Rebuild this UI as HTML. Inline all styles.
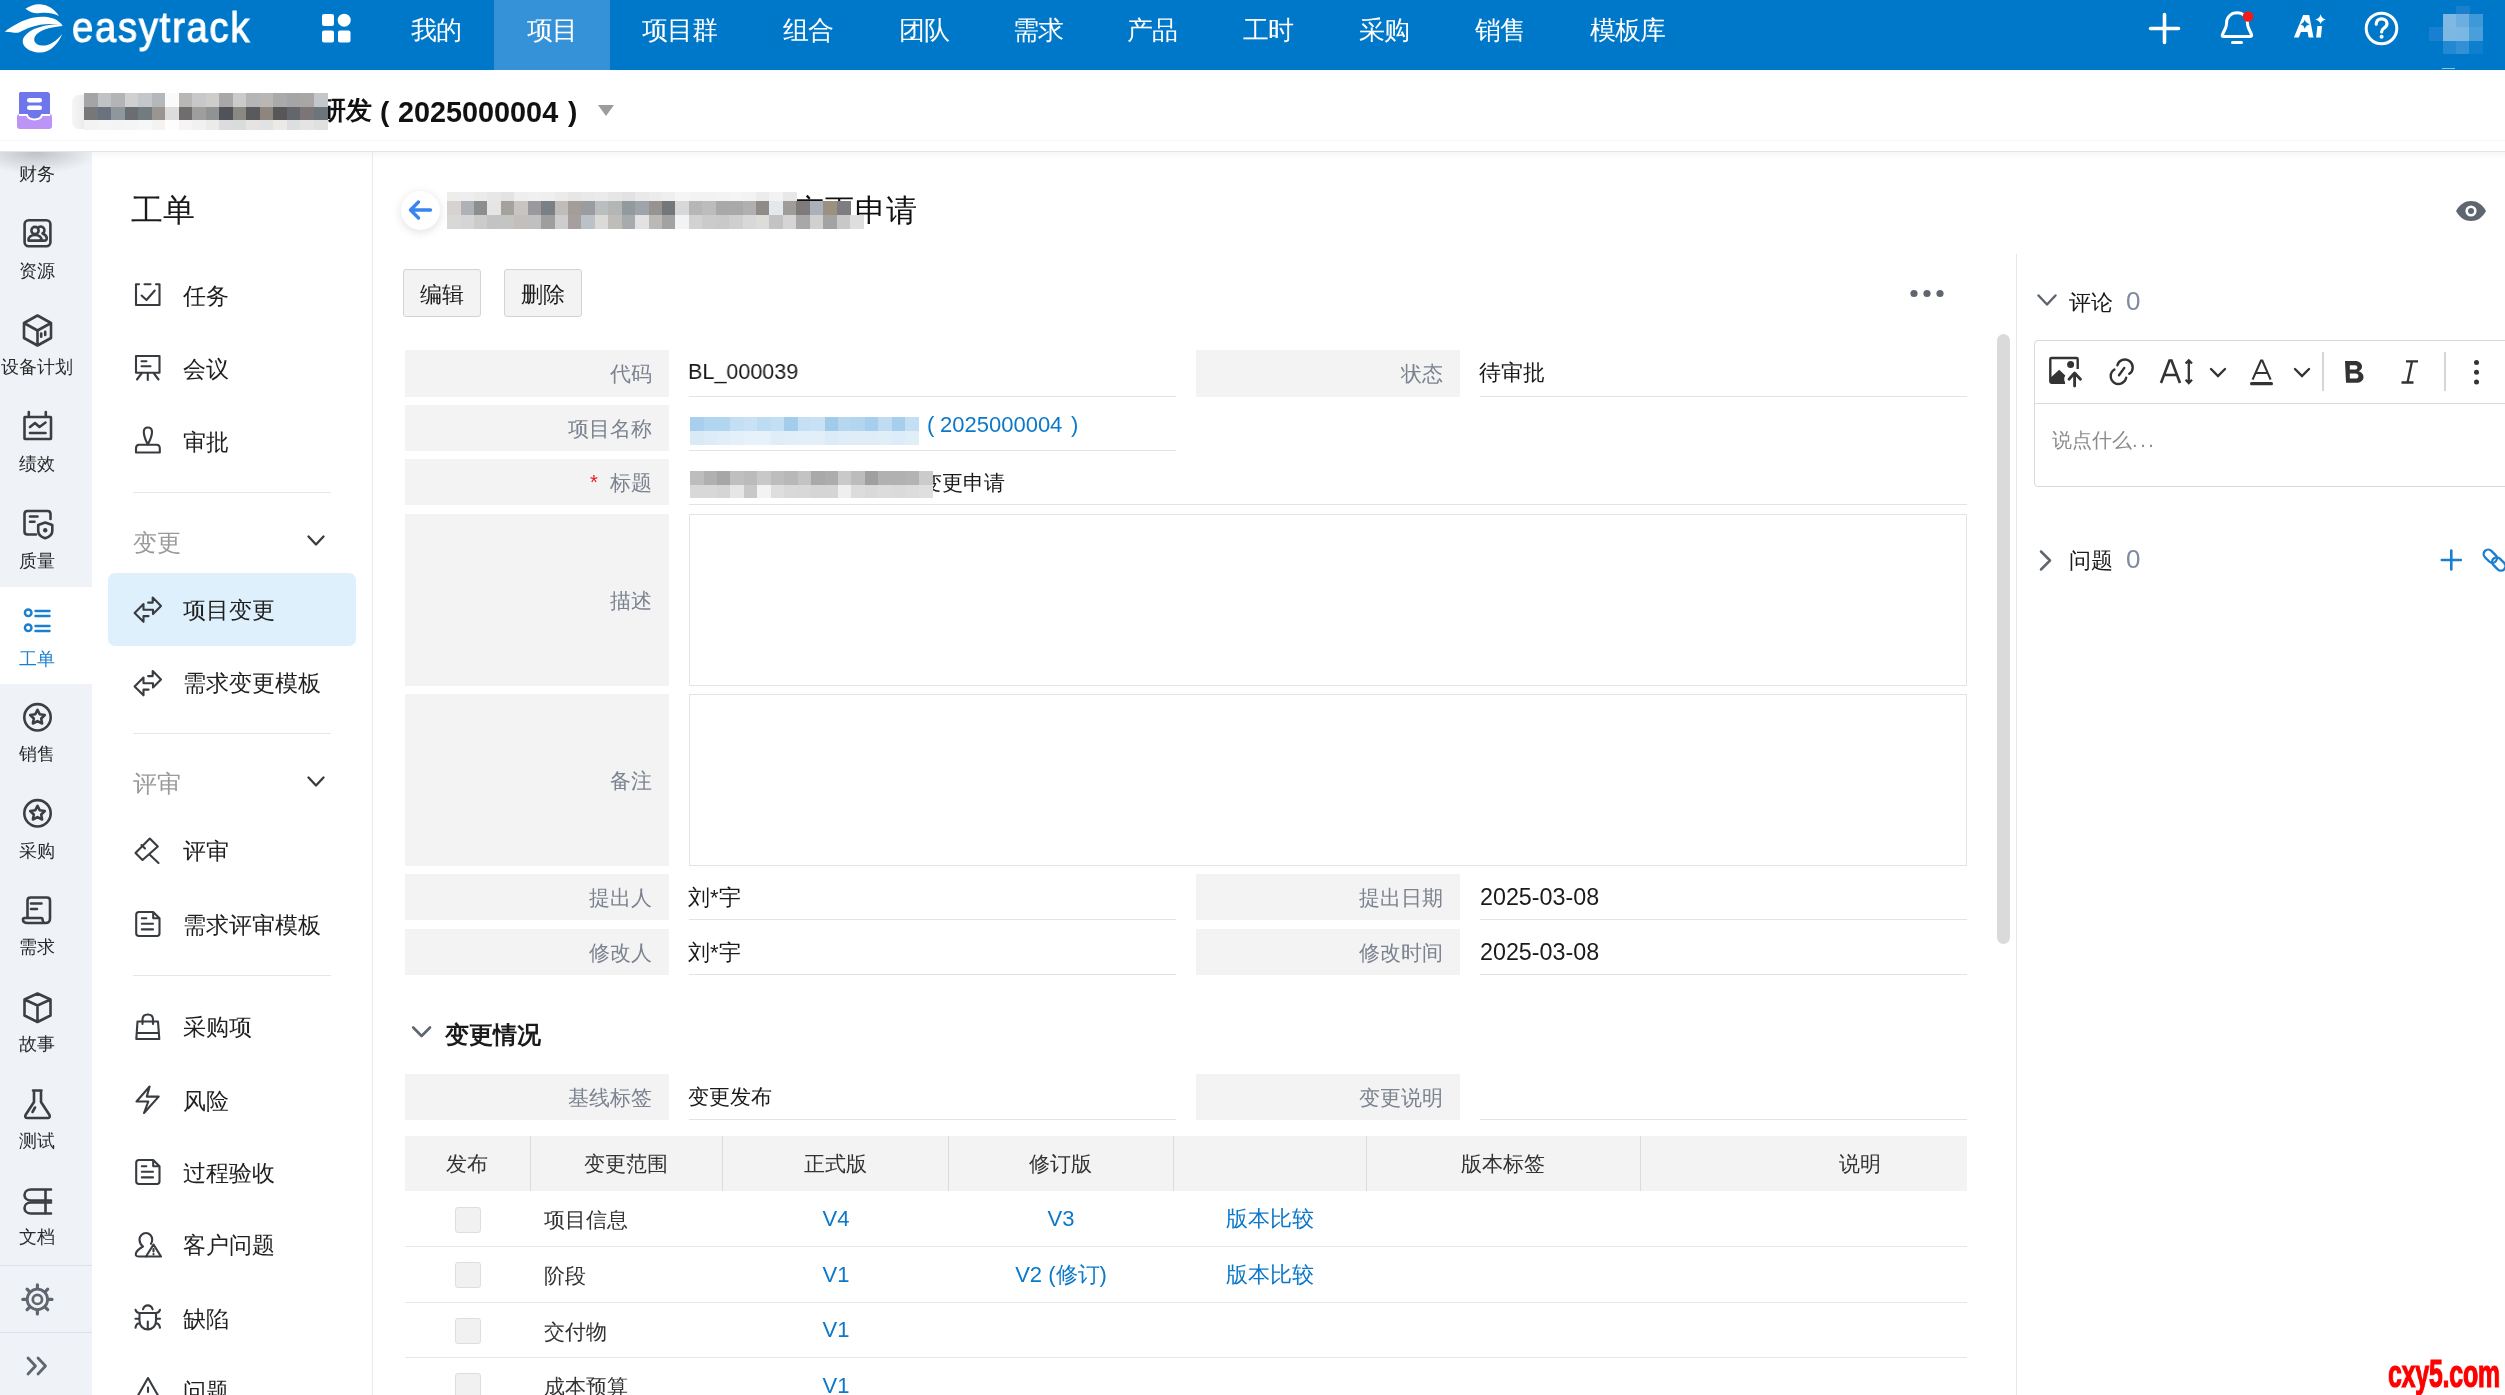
<!DOCTYPE html><html><head><meta charset="utf-8"><style>
html,body{margin:0;padding:0;width:2505px;height:1395px;overflow:hidden;background:#fff;font-family:"Liberation Sans",sans-serif;}
.t{position:absolute;white-space:nowrap;will-change:transform;}
.r{position:absolute;}
svg{position:absolute;overflow:visible;}
</style></head><body>
<div class="r" style="left:0px;top:0px;width:2505px;height:70px;background:#0078c9;"></div>
<div class="r" style="left:494px;top:0px;width:116px;height:70px;background:#3592d8;"></div>
<svg style="left:0;top:0" width="70" height="60" viewBox="0 0 70 60"><g fill="#fff">
<path d="M25.4,8.8 C30,5.5 36,3.8 40,4.3 C48,4.8 55,9.5 58.9,15.9 C53,13 47,12.3 40,13 C35,13.6 31,13 25.4,8.8 Z"/>
<path d="M4.7,31.8 C12,26 22,20 34,17.5 C45,15.5 57,17 62.8,25.8 C55,23 42,23 30,27.5 C24,29.5 20,32.5 17.5,32.8 C13,33 9,31.5 4.7,31.8 Z"/>
<path d="M59.5,24.2 C45,24.5 30,28 24,37 C20,44 26,51 38,52.5 C50,53.5 58,44 62.3,34 C56,41 50,46 42,45.6 C35,45 32,40 36,35 C40,30 50,27 62.8,26 Z"/>
</g></svg>
<div class="t" style="left:72px;top:-2.5px;font-size:42px;line-height:42px;color:#fff;font-weight:normal;line-height:60px;transform:scaleX(0.91);transform-origin:0 0;letter-spacing:1.9px;-webkit-text-stroke:1px #fff">easytrack</div>
<svg style="left:322;top:14px;left:322px" width="30" height="30" viewBox="0 0 30 30"><g fill="#fff">
<rect x="0" y="0" width="12" height="12" rx="2"/><circle cx="22.2" cy="6.2" r="6.5"/>
<rect x="0" y="16.5" width="12" height="12" rx="2"/><rect x="16" y="16.5" width="12.5" height="12" rx="2"/></g></svg>
<div class="t" style="left:411px;top:16.5px;font-size:26px;line-height:26px;color:#fff;font-weight:normal;letter-spacing:-0.8px">我的</div>
<div class="t" style="left:526.6px;top:16.5px;font-size:26px;line-height:26px;color:#fff;font-weight:normal;letter-spacing:-0.8px">项目</div>
<div class="t" style="left:642px;top:16.5px;font-size:26px;line-height:26px;color:#fff;font-weight:normal;letter-spacing:-0.8px">项目群</div>
<div class="t" style="left:782.7px;top:16.5px;font-size:26px;line-height:26px;color:#fff;font-weight:normal;letter-spacing:-0.8px">组合</div>
<div class="t" style="left:898.5px;top:16.5px;font-size:26px;line-height:26px;color:#fff;font-weight:normal;letter-spacing:-0.8px">团队</div>
<div class="t" style="left:1013px;top:16.5px;font-size:26px;line-height:26px;color:#fff;font-weight:normal;letter-spacing:-0.8px">需求</div>
<div class="t" style="left:1127px;top:16.5px;font-size:26px;line-height:26px;color:#fff;font-weight:normal;letter-spacing:-0.8px">产品</div>
<div class="t" style="left:1243px;top:16.5px;font-size:26px;line-height:26px;color:#fff;font-weight:normal;letter-spacing:-0.8px">工时</div>
<div class="t" style="left:1359px;top:16.5px;font-size:26px;line-height:26px;color:#fff;font-weight:normal;letter-spacing:-0.8px">采购</div>
<div class="t" style="left:1475px;top:16.5px;font-size:26px;line-height:26px;color:#fff;font-weight:normal;letter-spacing:-0.8px">销售</div>
<div class="t" style="left:1590px;top:16.5px;font-size:26px;line-height:26px;color:#fff;font-weight:normal;letter-spacing:-0.8px">模板库</div>
<svg style="left:2149px;top:13px" width="32" height="32" viewBox="0 0 32 32"><path d="M15.5,1.5 V29.5 M1.5,15.5 H29.5" stroke="#fff" stroke-width="3.6" stroke-linecap="round"/></svg>
<svg style="left:2220px;top:11px" width="36" height="36" viewBox="0 0 36 36"><g fill="none" stroke="#fff" stroke-width="3" stroke-linejoin="round" stroke-linecap="round">
<path d="M3,25.5 H30.5 C31.5,25.5 32,24.5 31.5,23.5 L28.5,17 C27.8,15.5 27.5,14 27.5,12.5 C27.5,6 23,1.8 17,1.8 C11,1.8 6.5,6 6.5,12.5 C6.5,14 6.2,15.5 5.5,17 L2.5,23.5 C2,24.5 2.2,25.5 3,25.5 Z"/>
<path d="M12.5,31.5 H21.5"/></g><circle cx="28" cy="5.5" r="5.3" fill="#f31a1a"/></svg>
<svg style="left:2293px;top:13px" width="36" height="28" viewBox="0 0 36 28"><g fill="#fff">
<path fill-rule="evenodd" d="M10.2,2 H16.2 L20.5,24.4 H15.6 L14.6,19 H7.9 L5.8,24.4 H0.9 Z M11.8,6.6 Q12.700000000000001,10.4 16.9,11.3 Q12.700000000000001,12.200000000000001 11.8,15.9 Q10.9,12.200000000000001 7.4,11.3 Q10.9,10.4 11.8,6.6 Z"/>
<path d="M24.4,13 H29 L27.9,24.4 H23.1 Z"/>
<path d="M27.6,1.2 Q28.6,5.4 32.7,6.4 Q28.6,7.4 27.6,11 Q26.6,7.4 22.4,6.4 Q26.6,5.4 27.6,1.2 Z"/>
</g></svg>
<svg style="left:2364px;top:11px" width="36" height="36" viewBox="0 0 36 36"><circle cx="17.5" cy="17.5" r="15.3" fill="none" stroke="#fff" stroke-width="3"/>
<path d="M12.2,13.2 C12.2,9.8 14.6,7.8 17.6,7.8 C20.7,7.8 23,9.8 23,12.8 C23,15.5 21,16.5 19.5,17.5 C18.2,18.4 17.6,19.3 17.6,21" fill="none" stroke="#fff" stroke-width="3.2" stroke-linecap="round"/>
<circle cx="17.6" cy="25.8" r="2" fill="#fff"/></svg>
<div class="r" style="left:2456.0px;top:6.0px;width:14.0px;height:8.7px;background:#1a80cd;"></div>
<div class="r" style="left:2442.5px;top:14.1px;width:14.0px;height:13.4px;background:#7eb8e3;"></div>
<div class="r" style="left:2456.0px;top:14.1px;width:14.0px;height:13.4px;background:#6aafe0;"></div>
<div class="r" style="left:2469.4px;top:14.1px;width:14.0px;height:13.4px;background:#3f98d8;"></div>
<div class="r" style="left:2429.1px;top:26.9px;width:14.0px;height:14.6px;background:#1980cf;"></div>
<div class="r" style="left:2442.5px;top:26.9px;width:14.0px;height:14.6px;background:#7db8e3;"></div>
<div class="r" style="left:2456.0px;top:26.9px;width:14.0px;height:14.6px;background:#7ab8e3;"></div>
<div class="r" style="left:2469.4px;top:26.9px;width:14.0px;height:14.6px;background:#4a9ed9;"></div>
<div class="r" style="left:2442.5px;top:40.9px;width:14.0px;height:13.5px;background:#2389d3;"></div>
<div class="r" style="left:2456.0px;top:40.9px;width:14.0px;height:13.5px;background:#3190d6;"></div>
<div class="r" style="left:2469.4px;top:40.9px;width:14.0px;height:13.5px;background:#0e7ecf;"></div>
<div class="r" style="left:2442px;top:68px;width:13px;height:1px;background:#8cc4ec;"></div>
<div class="r" style="left:0px;top:140px;width:2505px;height:1px;background:#f8f8f8;"></div>
<div class="r" style="left:0px;top:151px;width:2505px;height:1px;background:#e4e4e4;"></div>
<div class="r" style="left:92px;top:152px;width:2413px;height:7px;background:linear-gradient(rgba(0,0,0,0.035),rgba(0,0,0,0));"></div>
<svg style="left:17px;top:92px" width="36" height="38" viewBox="0 0 36 38">
<rect x="0" y="22" width="35" height="15" rx="3" fill="#bc93f6"/>
<path d="M3,0 H30 A3,3 0 0 1 33,3 V23 H24 C23,26 20,27 17,27 C14,27 11,26 10,23 H2 V3 A3,3 0 0 1 3,0 Z" fill="#6f75ea" stroke="#fff" stroke-width="0"/>
<path d="M2,23 H10 C11,26 14,27.5 17.5,27.5 C21,27.5 24,26 25,23 H33" fill="none" stroke="#fff" stroke-width="2"/>
<rect x="10" y="6" width="15" height="4.5" rx="2.2" fill="#fff"/><rect x="10" y="13.5" width="15" height="4.5" rx="2.2" fill="#fff"/>
</svg>
<div class="r" style="left:72px;top:95px;width:14px;height:34px;background:linear-gradient(90deg,#f6f6f6,#e9e9e9);border-radius:7px 0 0 7px"></div>
<div class="t" style="left:320px;top:97px;font-size:26px;line-height:26px;color:#111;font-weight:bold;">研发</div>
<div class="r" style="left:84.0px;top:93.0px;width:14.1px;height:14.6px;background:#a4a4a6;"></div>
<div class="r" style="left:97.5px;top:93.0px;width:14.1px;height:14.6px;background:#c0c3c6;"></div>
<div class="r" style="left:111.0px;top:93.0px;width:14.1px;height:14.6px;background:#b3b4b6;"></div>
<div class="r" style="left:124.5px;top:93.0px;width:14.1px;height:14.6px;background:#d0d0d2;"></div>
<div class="r" style="left:138.0px;top:93.0px;width:14.1px;height:14.6px;background:#c4c7c9;"></div>
<div class="r" style="left:151.5px;top:93.0px;width:14.1px;height:14.6px;background:#b5b8ba;"></div>
<div class="r" style="left:165.0px;top:93.0px;width:14.1px;height:14.6px;background:#fafafa;"></div>
<div class="r" style="left:178.5px;top:93.0px;width:14.1px;height:14.6px;background:#b9b7b6;"></div>
<div class="r" style="left:192.0px;top:93.0px;width:14.1px;height:14.6px;background:#c8c8ca;"></div>
<div class="r" style="left:205.5px;top:93.0px;width:14.1px;height:14.6px;background:#cfcdcb;"></div>
<div class="r" style="left:219.0px;top:93.0px;width:14.1px;height:14.6px;background:#a9a8a8;"></div>
<div class="r" style="left:232.5px;top:93.0px;width:14.1px;height:14.6px;background:#cbcbcb;"></div>
<div class="r" style="left:246.0px;top:93.0px;width:14.1px;height:14.6px;background:#b3b6b5;"></div>
<div class="r" style="left:259.5px;top:93.0px;width:14.1px;height:14.6px;background:#b9b6b3;"></div>
<div class="r" style="left:273.0px;top:93.0px;width:14.1px;height:14.6px;background:#aaaaaa;"></div>
<div class="r" style="left:286.5px;top:93.0px;width:14.1px;height:14.6px;background:#a5a5a7;"></div>
<div class="r" style="left:300.0px;top:93.0px;width:14.1px;height:14.6px;background:#a9a7a5;"></div>
<div class="r" style="left:313.5px;top:93.0px;width:14.1px;height:14.6px;background:#c4c7ca;"></div>
<div class="r" style="left:84.0px;top:107.0px;width:14.1px;height:13.6px;background:#77777a;"></div>
<div class="r" style="left:97.5px;top:107.0px;width:14.1px;height:13.6px;background:#6a7280;"></div>
<div class="r" style="left:111.0px;top:107.0px;width:14.1px;height:13.6px;background:#8e979e;"></div>
<div class="r" style="left:124.5px;top:107.0px;width:14.1px;height:13.6px;background:#6b6e70;"></div>
<div class="r" style="left:138.0px;top:107.0px;width:14.1px;height:13.6px;background:#727b80;"></div>
<div class="r" style="left:151.5px;top:107.0px;width:14.1px;height:13.6px;background:#9a9590;"></div>
<div class="r" style="left:165.0px;top:107.0px;width:14.1px;height:13.6px;background:#dcdcdc;"></div>
<div class="r" style="left:178.5px;top:107.0px;width:14.1px;height:13.6px;background:#6f6d6e;"></div>
<div class="r" style="left:192.0px;top:107.0px;width:14.1px;height:13.6px;background:#a09e9c;"></div>
<div class="r" style="left:205.5px;top:107.0px;width:14.1px;height:13.6px;background:#8f9394;"></div>
<div class="r" style="left:219.0px;top:107.0px;width:14.1px;height:13.6px;background:#50535a;"></div>
<div class="r" style="left:232.5px;top:107.0px;width:14.1px;height:13.6px;background:#8a8882;"></div>
<div class="r" style="left:246.0px;top:107.0px;width:14.1px;height:13.6px;background:#5a5a5c;"></div>
<div class="r" style="left:259.5px;top:107.0px;width:14.1px;height:13.6px;background:#8e857e;"></div>
<div class="r" style="left:273.0px;top:107.0px;width:14.1px;height:13.6px;background:#575757;"></div>
<div class="r" style="left:286.5px;top:107.0px;width:14.1px;height:13.6px;background:#63666b;"></div>
<div class="r" style="left:300.0px;top:107.0px;width:14.1px;height:13.6px;background:#7b7675;"></div>
<div class="r" style="left:313.5px;top:107.0px;width:14.1px;height:13.6px;background:#6d757c;"></div>
<div class="r" style="left:84.0px;top:120.0px;width:14.1px;height:9.6px;background:#f3f3f3;"></div>
<div class="r" style="left:97.5px;top:120.0px;width:14.1px;height:9.6px;background:#f5f5f5;"></div>
<div class="r" style="left:111.0px;top:120.0px;width:14.1px;height:9.6px;background:#f3f4f3;"></div>
<div class="r" style="left:124.5px;top:120.0px;width:14.1px;height:9.6px;background:#f5f5f5;"></div>
<div class="r" style="left:138.0px;top:120.0px;width:14.1px;height:9.6px;background:#f7f7f7;"></div>
<div class="r" style="left:151.5px;top:120.0px;width:14.1px;height:9.6px;background:#f3f3f3;"></div>
<div class="r" style="left:165.0px;top:120.0px;width:14.1px;height:9.6px;background:#fdfdfd;"></div>
<div class="r" style="left:178.5px;top:120.0px;width:14.1px;height:9.6px;background:#f5f5f5;"></div>
<div class="r" style="left:192.0px;top:120.0px;width:14.1px;height:9.6px;background:#f1f1f1;"></div>
<div class="r" style="left:205.5px;top:120.0px;width:14.1px;height:9.6px;background:#ebebeb;"></div>
<div class="r" style="left:219.0px;top:120.0px;width:14.1px;height:9.6px;background:#dcdcdc;"></div>
<div class="r" style="left:232.5px;top:120.0px;width:14.1px;height:9.6px;background:#dadcdc;"></div>
<div class="r" style="left:246.0px;top:120.0px;width:14.1px;height:9.6px;background:#e6e4e2;"></div>
<div class="r" style="left:259.5px;top:120.0px;width:14.1px;height:9.6px;background:#e0e2e4;"></div>
<div class="r" style="left:273.0px;top:120.0px;width:14.1px;height:9.6px;background:#ebeae6;"></div>
<div class="r" style="left:286.5px;top:120.0px;width:14.1px;height:9.6px;background:#dcdee0;"></div>
<div class="r" style="left:300.0px;top:120.0px;width:14.1px;height:9.6px;background:#e4e4e4;"></div>
<div class="r" style="left:313.5px;top:120.0px;width:14.1px;height:9.6px;background:#e0e0e0;"></div>
<div class="t" style="left:380px;top:98px;font-size:28px;line-height:28px;color:#111;font-weight:bold;">(</div>
<div class="t" style="left:398px;top:98px;font-size:28.8px;line-height:28.8px;color:#111;font-weight:bold;">2025000004</div>
<div class="t" style="left:568px;top:98px;font-size:28px;line-height:28px;color:#111;font-weight:bold;">)</div>
<svg style="left:597px;top:104px" width="18" height="13" viewBox="0 0 18 13"><path d="M1,1 H17 L9,12 Z" fill="#9c9c9c"/></svg>
<div class="r" style="left:0px;top:152px;width:92px;height:1243px;background:#eff3f7;"></div>
<div class="r" style="left:0px;top:152px;width:92px;height:26px;background:radial-gradient(ellipse 62px 22px at 36px 0px, rgba(110,110,115,0.38), rgba(200,200,200,0) 100%);"></div>
<div class="r" style="left:0px;top:587px;width:92px;height:97px;background:#ffffff;"></div>
<div class="t" style="left:19px;top:165px;font-size:18px;line-height:18px;color:#2a2a2a;font-weight:normal;">财务</div>
<div class="t" style="left:19px;top:262px;font-size:18px;line-height:18px;color:#2a2a2a;font-weight:normal;">资源</div>
<div class="t" style="left:1px;top:358px;font-size:18px;line-height:18px;color:#2a2a2a;font-weight:normal;">设备计划</div>
<div class="t" style="left:19px;top:455px;font-size:18px;line-height:18px;color:#2a2a2a;font-weight:normal;">绩效</div>
<div class="t" style="left:19px;top:552px;font-size:18px;line-height:18px;color:#2a2a2a;font-weight:normal;">质量</div>
<div class="t" style="left:19px;top:649.5px;font-size:18px;line-height:18px;color:#1a7fd0;font-weight:normal;">工单</div>
<div class="t" style="left:19px;top:745px;font-size:18px;line-height:18px;color:#2a2a2a;font-weight:normal;">销售</div>
<div class="t" style="left:19px;top:842px;font-size:18px;line-height:18px;color:#2a2a2a;font-weight:normal;">采购</div>
<div class="t" style="left:19px;top:938px;font-size:18px;line-height:18px;color:#2a2a2a;font-weight:normal;">需求</div>
<div class="t" style="left:19px;top:1035px;font-size:18px;line-height:18px;color:#2a2a2a;font-weight:normal;">故事</div>
<div class="t" style="left:19px;top:1132px;font-size:18px;line-height:18px;color:#2a2a2a;font-weight:normal;">测试</div>
<div class="t" style="left:19px;top:1228px;font-size:18px;line-height:18px;color:#2a2a2a;font-weight:normal;">文档</div>
<div class="r" style="left:0px;top:1265px;width:92px;height:1px;background:#dbe2ea;"></div>
<div class="r" style="left:0px;top:1332px;width:92px;height:1px;background:#dbe2ea;"></div>
<svg style="left:0;top:0" width="92" height="1395" viewBox="0 0 92 1395"><rect x="24.6" y="220.3" width="25.8" height="26" rx="4" fill="none" stroke="#3b3e43" stroke-width="2.6" stroke-linecap="round" stroke-linejoin="round"/><circle cx="35" cy="230.5" r="3.6" fill="none" stroke="#3b3e43" stroke-width="2.6" stroke-linecap="round" stroke-linejoin="round"/><path d="M39,227 A3.4,3.4 0 1 1 42.5,233.5 C45,234.5 46.5,236 46.8,238 C47,239.5 46,240.6 44.5,240.6 H40" fill="none" stroke="#3b3e43" stroke-width="2.6" stroke-linecap="round" stroke-linejoin="round"/><path d="M28.5,240.6 C28,237 31,235 35,235 C39,235 42,237 41.5,240.6 Z" fill="none" stroke="#3b3e43" stroke-width="2.6" stroke-linecap="round" stroke-linejoin="round"/><path d="M37.5,315.5 L51,323 V338 L37.5,345.5 L24,338 V323 Z M24,323 L37.5,330.5 L51,323 M37.5,330.5 V345.5" fill="none" stroke="#3b3e43" stroke-width="2.6" stroke-linecap="round" stroke-linejoin="round"/><path d="M41.2,333.5 V336.8 M45.2,331.8 V335" fill="none" stroke="#3b3e43" stroke-width="2.6" stroke-linecap="round" stroke-linejoin="round"/><rect x="24.5" y="417" width="26.5" height="22" rx="0.5" fill="none" stroke="#3b3e43" stroke-width="2.6" stroke-linecap="round" stroke-linejoin="round"/><path d="M28.8,412 V416 M45.8,412 V416" fill="none" stroke="#3b3e43" stroke-width="2.6" stroke-linecap="round" stroke-linejoin="round"/><path d="M30,427 L35,423 L39.5,427 L45.5,422.5 M30,433 H45.5" fill="none" stroke="#3b3e43" stroke-width="2.6" stroke-linecap="round" stroke-linejoin="round"/><path d="M36,534.5 H27.5 C25.5,534.5 24.5,533.5 24.5,531.5 V514 C24.5,512 25.5,511 27.5,511 H47.5 C49.5,511 50.5,512 50.5,514 V519" fill="none" stroke="#3b3e43" stroke-width="2.6" stroke-linecap="round" stroke-linejoin="round"/><path d="M30,516.5 H37.5 M30,521.8 H34.5" fill="none" stroke="#3b3e43" stroke-width="2.6" stroke-linecap="round" stroke-linejoin="round"/><path d="M45.2,522.5 L52.3,525 V531 C52.3,534.5 49,537 45.2,538.3 C41.4,537 38.2,534.5 38.2,531 V525 Z" fill="none" stroke="#3b3e43" stroke-width="2.6" stroke-linecap="round" stroke-linejoin="round"/><circle cx="45.2" cy="530.3" r="2.2" fill="#3b3e43"/><circle cx="37.5" cy="717.3" r="13.2" fill="none" stroke="#3b3e43" stroke-width="2.6" stroke-linecap="round" stroke-linejoin="round"/><path d="M37.5,709.8 L39.8,714.3 L44.8,715 L41.2,718.5 L42.1,723.5 L37.5,721.1 L32.9,723.5 L33.8,718.5 L30.2,715 L35.2,714.3 Z" fill="none" stroke="#3b3e43" stroke-width="2.6" stroke-linecap="round" stroke-linejoin="round"/><circle cx="37.5" cy="813.3" r="13.2" fill="none" stroke="#3b3e43" stroke-width="2.6" stroke-linecap="round" stroke-linejoin="round"/><path d="M37.5,805.8 L39.8,810.3 L44.8,811 L41.2,814.5 L42.1,819.5 L37.5,817.1 L32.9,819.5 L33.8,814.5 L30.2,811 L35.2,810.3 Z" fill="none" stroke="#3b3e43" stroke-width="2.6" stroke-linecap="round" stroke-linejoin="round"/><path d="M27.5,918 V900.5 C27.5,898.5 28.5,897.5 30.5,897.5 H47 C49,897.5 50,898.5 50,900.5 V918.5 C50,921.5 48,923 45.5,923 H27.5 C24.5,923 23,921.5 23,919.5 C23,918.5 23.5,918 24.5,918 H41 C42,918 42.5,918.5 42.5,919.5 C42.5,921.5 44,923 45.5,923" fill="none" stroke="#3b3e43" stroke-width="2.6" stroke-linecap="round" stroke-linejoin="round"/><path d="M31,903.5 H41.5 M31,909 H37" fill="none" stroke="#3b3e43" stroke-width="2.6" stroke-linecap="round" stroke-linejoin="round"/><path d="M37.5,993.5 L50.5,999.5 V1015.5 L37.5,1022 L24.5,1015.5 V999.5 Z M24.5,999.5 L37.5,1005.5 L50.5,999.5 M37.5,1005.5 V1022" fill="none" stroke="#3b3e43" stroke-width="2.6" stroke-linecap="round" stroke-linejoin="round"/><path d="M33,1090.5 H41.5 M34,1090.5 V1102 L25.5,1115 C24.8,1116.5 25.5,1118 27.2,1118 H47.8 C49.5,1118 50.2,1116.5 49.5,1115 L41,1102 V1090.5" fill="none" stroke="#3b3e43" stroke-width="2.6" stroke-linecap="round" stroke-linejoin="round"/><path d="M32.5,1112 L35,1107.5" fill="none" stroke="#3b3e43" stroke-width="2.6" stroke-linecap="round" stroke-linejoin="round"/><path d="M51,1189.5 H31 C27,1189.5 24.5,1192 24.5,1195 C24.5,1198 27,1200.5 31,1200.5 H51 M45.5,1189.5 V1200.5" fill="none" stroke="#3b3e43" stroke-width="2.6" stroke-linecap="round" stroke-linejoin="round"/><path d="M51,1202.5 H31 C27,1202.5 24.5,1205 24.5,1208 C24.5,1211 27,1213.5 31,1213.5 H51 M45.5,1202.5 V1213.5" fill="none" stroke="#3b3e43" stroke-width="2.6" stroke-linecap="round" stroke-linejoin="round"/><circle cx="28.2" cy="612.8" r="3.3" fill="none" stroke="#1a7fd0" stroke-width="2.4"/><circle cx="28.2" cy="627.8" r="3.3" fill="none" stroke="#1a7fd0" stroke-width="2.4"/><path d="M35.5,611 H49.5 M35.5,616 H49.5 M35.5,626 H49.5 M35.5,631 H49.5" stroke="#1a7fd0" stroke-width="2.4" stroke-linecap="round"/><circle cx="37.4" cy="1299.4" r="10.2" fill="none" stroke="#5f6670" stroke-width="2.8"/><circle cx="37.4" cy="1299.4" r="4.6" fill="none" stroke="#5f6670" stroke-width="2.7"/><path d="M48.90,1299.40 L52.00,1299.40 M45.53,1307.53 L47.72,1309.72 M37.40,1310.90 L37.40,1314.00 M29.27,1307.53 L27.08,1309.72 M25.90,1299.40 L22.80,1299.40 M29.27,1291.27 L27.08,1289.08 M37.40,1287.90 L37.40,1284.80 M45.53,1291.27 L47.72,1289.08" stroke="#5f6670" stroke-width="3.2" stroke-linecap="round"/><path d="M28,1358 L35.5,1366 L28,1374 M38,1358 L45.5,1366 L38,1374" fill="none" stroke="#5f6670" stroke-width="2.8" stroke-linecap="round" stroke-linejoin="round"/></svg>
<div class="r" style="left:372px;top:152px;width:1px;height:1243px;background:#e6eaef;"></div>
<div class="t" style="left:131px;top:194.5px;font-size:31.5px;line-height:31.5px;color:#1a1a1a;font-weight:normal;">工单</div>
<div class="r" style="left:108px;top:573px;width:248px;height:73px;background:#dff0fd;border-radius:7px"></div>
<div class="r" style="left:133px;top:492px;width:198px;height:1px;background:#e3e8ee;"></div>
<div class="r" style="left:133px;top:733px;width:198px;height:1px;background:#e3e8ee;"></div>
<div class="r" style="left:133px;top:975px;width:198px;height:1px;background:#e3e8ee;"></div>
<div class="t" style="left:183px;top:284.5px;font-size:23.3px;line-height:23.3px;color:#1f1f1f;font-weight:normal;">任务</div>
<div class="t" style="left:183px;top:357.5px;font-size:23.3px;line-height:23.3px;color:#1f1f1f;font-weight:normal;">会议</div>
<div class="t" style="left:183px;top:430.5px;font-size:23.3px;line-height:23.3px;color:#1f1f1f;font-weight:normal;">审批</div>
<div class="t" style="left:183px;top:598.5px;font-size:23.3px;line-height:23.3px;color:#1f1f1f;font-weight:normal;">项目变更</div>
<div class="t" style="left:183px;top:671.5px;font-size:23.3px;line-height:23.3px;color:#1f1f1f;font-weight:normal;">需求变更模板</div>
<div class="t" style="left:183px;top:839.5px;font-size:23.3px;line-height:23.3px;color:#1f1f1f;font-weight:normal;">评审</div>
<div class="t" style="left:183px;top:913.5px;font-size:23.3px;line-height:23.3px;color:#1f1f1f;font-weight:normal;">需求评审模板</div>
<div class="t" style="left:183px;top:1015.5px;font-size:23.3px;line-height:23.3px;color:#1f1f1f;font-weight:normal;">采购项</div>
<div class="t" style="left:183px;top:1089.5px;font-size:23.3px;line-height:23.3px;color:#1f1f1f;font-weight:normal;">风险</div>
<div class="t" style="left:183px;top:1161.5px;font-size:23.3px;line-height:23.3px;color:#1f1f1f;font-weight:normal;">过程验收</div>
<div class="t" style="left:183px;top:1233.5px;font-size:23.3px;line-height:23.3px;color:#1f1f1f;font-weight:normal;">客户问题</div>
<div class="t" style="left:183px;top:1307.5px;font-size:23.3px;line-height:23.3px;color:#1f1f1f;font-weight:normal;">缺陷</div>
<div class="t" style="left:183px;top:1379.5px;font-size:23.3px;line-height:23.3px;color:#1f1f1f;font-weight:normal;">问题</div>
<div class="t" style="left:133px;top:530.5px;font-size:24px;line-height:24px;color:#9a9a9a;font-weight:normal;">变更</div>
<div class="t" style="left:133px;top:771.5px;font-size:24px;line-height:24px;color:#9a9a9a;font-weight:normal;">评审</div>
<svg style="left:0;top:0" width="372" height="1395" viewBox="0 0 372 1395"><path d="M136,284.2 V305 H159.5 V284.2 M136,284.2 H139 M144.5,284.2 H150.5 M156,284.2 H159.5" fill="none" stroke="#383b40" stroke-width="2.1" stroke-linecap="round" stroke-linejoin="round"/><path d="M141.6,295.5 L146.5,300 L154.8,290.5" fill="none" stroke="#383b40" stroke-width="2.1" stroke-linecap="round" stroke-linejoin="round"/><rect x="136" y="356" width="23.5" height="16.8" fill="none" stroke="#383b40" stroke-width="2.1" stroke-linecap="round" stroke-linejoin="round"/><path d="M141.5,361.2 H146.5 M141.5,366.2 H150.5 M147.8,373 V380 M141.5,373.5 L137,379.5 M154,373.5 L158.5,379.5" fill="none" stroke="#383b40" stroke-width="2.1" stroke-linecap="round" stroke-linejoin="round"/><path d="M147.8,444.5 C145.5,440 143.8,436 143.8,432 C143.8,429.2 145.5,427.5 147.8,427.5 C150.2,427.5 152,429.2 152,432 C152,436 150.2,440 147.8,444.5 Z" fill="none" stroke="#383b40" stroke-width="2.1" stroke-linecap="round" stroke-linejoin="round"/><path d="M139,444.8 H156.5 C158.5,444.8 159.8,446.5 159.8,448.5 V452.5 H136 V448.5 C136,446.5 137,444.8 139,444.8 Z" fill="none" stroke="#383b40" stroke-width="2.1" stroke-linecap="round" stroke-linejoin="round"/><path d="M148.1,602.6 H152.7 V597.5 L161,606 L153,614.1 V609.8 H143.5 V604 L134.6,613 L143.5,621.8 V616.1 H148.6" fill="none" stroke="#383b40" stroke-width="2.1" stroke-linecap="round" stroke-linejoin="round"/><path d="M148.1,676.1 H152.7 V671 L161,679.5 L153,687.6 V683.3 H143.5 V677.5 L134.6,686.5 L143.5,695.3 V689.6 H148.6" fill="none" stroke="#383b40" stroke-width="2.1" stroke-linecap="round" stroke-linejoin="round"/><path d="M149.8,838.5 L157.8,846.5 L142.5,860 L135.5,853 Z M141.5,845 L145,848.5 M149.5,854.5 L158.5,863" fill="none" stroke="#383b40" stroke-width="2.1" stroke-linecap="round" stroke-linejoin="round"/><path d="M139,912 H153.2 L159.5,918.3 V933.3 C159.5,935 158.5,936 157,936 H139 C137.2,936 136.2,935 136.2,933.3 V914.8 C136.2,913 137.2,912 139,912 Z M153.2,912 V918.3 H159.5" fill="none" stroke="#383b40" stroke-width="2.1" stroke-linecap="round" stroke-linejoin="round"/><path d="M141.8,918.2 H146.3 M141.8,923.8 H153 M141.8,929.4 H153" fill="none" stroke="#383b40" stroke-width="2.1" stroke-linecap="round" stroke-linejoin="round"/><path d="M137.5,1021.5 H158 L159.3,1039 H136.3 Z M136.8,1033 H158.8 M142.5,1024 V1019.5 C142.5,1016 145,1014.5 147.8,1014.5 C150.5,1014.5 153,1016 153,1019.5 V1024" fill="none" stroke="#383b40" stroke-width="2.1" stroke-linecap="round" stroke-linejoin="round"/><path d="M149.6,1086.5 L136.5,1101.5 H148.3 L144,1113 L158.7,1096.6 H146.8 Z" fill="none" stroke="#383b40" stroke-width="2.1" stroke-linecap="round" stroke-linejoin="round"/><path d="M139,1160 H153.2 L159.5,1166.3 V1181.3 C159.5,1183 158.5,1184 157,1184 H139 C137.2,1184 136.2,1183 136.2,1181.3 V1162.8 C136.2,1161 137.2,1160 139,1160 Z M153.2,1160 V1166.3 H159.5" fill="none" stroke="#383b40" stroke-width="2.1" stroke-linecap="round" stroke-linejoin="round"/><path d="M141.8,1166.2 H146.3 M141.8,1171.8 H153 M141.8,1177.4 H153" fill="none" stroke="#383b40" stroke-width="2.1" stroke-linecap="round" stroke-linejoin="round"/><path d="M146,1256.5 H138.5 C136,1256.5 135.3,1255 136,1253 C137,1250.5 139.5,1248.5 143,1246.5 C140.5,1244.5 139.5,1242 139.5,1239.5 C139.5,1236 142.5,1233 146,1233 C149.5,1233 152.2,1236 152.2,1239.5 C152.2,1241 151.8,1242.5 151,1243.8" fill="none" stroke="#383b40" stroke-width="2.1" stroke-linecap="round" stroke-linejoin="round"/><path d="M153.5,1244.5 L161,1256.5 H146 Z M153.5,1249 V1251.5 M153.5,1254 V1254.2" fill="none" stroke="#383b40" stroke-width="2.1" stroke-linecap="round" stroke-linejoin="round"/><path d="M139.5,1313 H156 V1320.5 C156,1326 152.5,1329.5 147.8,1329.5 C143,1329.5 139.5,1326 139.5,1320.5 Z M143,1309.3 C143.8,1306.8 145.5,1305.4 147.8,1305.4 C150,1305.4 151.8,1306.8 152.6,1309.3 M147.8,1321.5 V1329 M139.5,1313 C137.5,1313 136,1311.5 135.5,1309.8 M156,1313 C158,1313 159.5,1311.5 160,1309.8 M139.5,1318.8 H135.5 M156,1318.8 H160 M139.5,1323.3 C137.5,1323.3 136,1325 135.5,1327.8 M156,1323.3 C158,1323.3 159.5,1325 160,1327.8" fill="none" stroke="#383b40" stroke-width="2.1" stroke-linecap="round" stroke-linejoin="round"/><path d="M148,1378 L160,1399 H136 Z M148,1387.5 V1392" fill="none" stroke="#383b40" stroke-width="2.1" stroke-linecap="round" stroke-linejoin="round"/><path d="M308.5,536.5 L316,544.5 L323.5,536.5 M308.5,777.5 L316,785.5 L323.5,777.5" fill="none" stroke="#383b40" stroke-width="2.3" stroke-linecap="round" stroke-linejoin="round"/></svg>
<div class="r" style="left:400.5px;top:190.5px;width:39px;height:39px;border-radius:50%;background:#fff;box-shadow:0 2px 10px rgba(0,0,0,0.13)"></div>
<svg style="left:400px;top:190px" width="40" height="40" viewBox="0 0 40 40"><path d="M10.5,20 H30.5 M18.5,12 L10.5,20 L18.5,28" fill="none" stroke="#3a84ef" stroke-width="3.4" stroke-linecap="round" stroke-linejoin="round"/></svg>
<div class="t" style="left:793px;top:195px;font-size:31px;line-height:31px;color:#111;font-weight:normal;">变更申请</div>
<div class="r" style="left:447.1px;top:192.0px;width:14.0px;height:9.9px;background:#ededed;"></div>
<div class="r" style="left:460.5px;top:192.0px;width:14.0px;height:9.9px;background:#eeeeee;"></div>
<div class="r" style="left:474.0px;top:192.0px;width:14.0px;height:9.9px;background:#ebebeb;"></div>
<div class="r" style="left:487.4px;top:192.0px;width:14.0px;height:9.9px;background:#e7e7e7;"></div>
<div class="r" style="left:500.8px;top:192.0px;width:14.0px;height:9.9px;background:#e3e3e3;"></div>
<div class="r" style="left:514.2px;top:192.0px;width:14.0px;height:9.9px;background:#eeeeee;"></div>
<div class="r" style="left:527.7px;top:192.0px;width:14.0px;height:9.9px;background:#f0f0f0;"></div>
<div class="r" style="left:541.1px;top:192.0px;width:14.0px;height:9.9px;background:#efefef;"></div>
<div class="r" style="left:554.5px;top:192.0px;width:14.0px;height:9.9px;background:#ebebeb;"></div>
<div class="r" style="left:568.0px;top:192.0px;width:14.0px;height:9.9px;background:#e6e6e6;"></div>
<div class="r" style="left:581.4px;top:192.0px;width:14.0px;height:9.9px;background:#e9e9e9;"></div>
<div class="r" style="left:594.8px;top:192.0px;width:14.0px;height:9.9px;background:#ebebeb;"></div>
<div class="r" style="left:608.3px;top:192.0px;width:14.0px;height:9.9px;background:#e6e6e6;"></div>
<div class="r" style="left:621.7px;top:192.0px;width:14.0px;height:9.9px;background:#e2e2e2;"></div>
<div class="r" style="left:635.1px;top:192.0px;width:14.0px;height:9.9px;background:#e9e9e9;"></div>
<div class="r" style="left:648.5px;top:192.0px;width:14.0px;height:9.9px;background:#ececec;"></div>
<div class="r" style="left:662.0px;top:192.0px;width:14.0px;height:9.9px;background:#efefef;"></div>
<div class="r" style="left:675.4px;top:192.0px;width:14.0px;height:9.9px;background:#f5f5f5;"></div>
<div class="r" style="left:688.8px;top:192.0px;width:14.0px;height:9.9px;background:#f3f3f3;"></div>
<div class="r" style="left:702.3px;top:192.0px;width:14.0px;height:9.9px;background:#f2f2f2;"></div>
<div class="r" style="left:715.7px;top:192.0px;width:14.0px;height:9.9px;background:#f3f3f3;"></div>
<div class="r" style="left:729.1px;top:192.0px;width:14.0px;height:9.9px;background:#f5f5f5;"></div>
<div class="r" style="left:742.6px;top:192.0px;width:14.0px;height:9.9px;background:#f3f3f3;"></div>
<div class="r" style="left:756.0px;top:192.0px;width:14.0px;height:9.9px;background:#ececec;"></div>
<div class="r" style="left:769.4px;top:192.0px;width:14.0px;height:9.9px;background:#f3f3f3;"></div>
<div class="r" style="left:782.8px;top:192.0px;width:14.0px;height:9.9px;background:#e8e8e8;"></div>
<div class="r" style="left:447.1px;top:201.3px;width:14.0px;height:14.0px;background:#d6d2cf;"></div>
<div class="r" style="left:460.5px;top:201.3px;width:14.0px;height:14.0px;background:#aeb1b6;"></div>
<div class="r" style="left:474.0px;top:201.3px;width:14.0px;height:14.0px;background:#8e8e8e;"></div>
<div class="r" style="left:487.4px;top:201.3px;width:14.0px;height:14.0px;background:#e5e5e6;"></div>
<div class="r" style="left:500.8px;top:201.3px;width:14.0px;height:14.0px;background:#a5a19d;"></div>
<div class="r" style="left:514.2px;top:201.3px;width:14.0px;height:14.0px;background:#c8c4c1;"></div>
<div class="r" style="left:527.7px;top:201.3px;width:14.0px;height:14.0px;background:#9a9a9e;"></div>
<div class="r" style="left:541.1px;top:201.3px;width:14.0px;height:14.0px;background:#7b7f86;"></div>
<div class="r" style="left:554.5px;top:201.3px;width:14.0px;height:14.0px;background:#c0bcb8;"></div>
<div class="r" style="left:568.0px;top:201.3px;width:14.0px;height:14.0px;background:#a49c99;"></div>
<div class="r" style="left:581.4px;top:201.3px;width:14.0px;height:14.0px;background:#9a9c9f;"></div>
<div class="r" style="left:594.8px;top:201.3px;width:14.0px;height:14.0px;background:#b8bfbe;"></div>
<div class="r" style="left:608.3px;top:201.3px;width:14.0px;height:14.0px;background:#b4b6b5;"></div>
<div class="r" style="left:621.7px;top:201.3px;width:14.0px;height:14.0px;background:#939a9d;"></div>
<div class="r" style="left:635.1px;top:201.3px;width:14.0px;height:14.0px;background:#9fa4aa;"></div>
<div class="r" style="left:648.5px;top:201.3px;width:14.0px;height:14.0px;background:#969391;"></div>
<div class="r" style="left:662.0px;top:201.3px;width:14.0px;height:14.0px;background:#737779;"></div>
<div class="r" style="left:675.4px;top:201.3px;width:14.0px;height:14.0px;background:#d8d8d8;"></div>
<div class="r" style="left:688.8px;top:201.3px;width:14.0px;height:14.0px;background:#b5b6b8;"></div>
<div class="r" style="left:702.3px;top:201.3px;width:14.0px;height:14.0px;background:#bebcba;"></div>
<div class="r" style="left:715.7px;top:201.3px;width:14.0px;height:14.0px;background:#a8aaa9;"></div>
<div class="r" style="left:729.1px;top:201.3px;width:14.0px;height:14.0px;background:#a9a9a9;"></div>
<div class="r" style="left:742.6px;top:201.3px;width:14.0px;height:14.0px;background:#b0b0b0;"></div>
<div class="r" style="left:756.0px;top:201.3px;width:14.0px;height:14.0px;background:#8f8b86;"></div>
<div class="r" style="left:769.4px;top:201.3px;width:14.0px;height:14.0px;background:#e4e7ec;"></div>
<div class="r" style="left:782.8px;top:201.3px;width:14.0px;height:14.0px;background:#9f9d9a;"></div>
<div class="r" style="left:796.3px;top:201.3px;width:14.0px;height:14.0px;background:#7f7a7b;"></div>
<div class="r" style="left:809.7px;top:201.3px;width:14.0px;height:14.0px;background:#aab1b9;"></div>
<div class="r" style="left:823.1px;top:201.3px;width:14.0px;height:14.0px;background:#9a9180;"></div>
<div class="r" style="left:836.6px;top:201.3px;width:14.0px;height:14.0px;background:#7c7e82;"></div>
<div class="r" style="left:447.1px;top:214.7px;width:14.0px;height:13.9px;background:#d8d8d8;"></div>
<div class="r" style="left:460.5px;top:214.7px;width:14.0px;height:13.9px;background:#d5d5d5;"></div>
<div class="r" style="left:474.0px;top:214.7px;width:14.0px;height:13.9px;background:#cbcbcb;"></div>
<div class="r" style="left:487.4px;top:214.7px;width:14.0px;height:13.9px;background:#c3c3c3;"></div>
<div class="r" style="left:500.8px;top:214.7px;width:14.0px;height:13.9px;background:#c3c5c2;"></div>
<div class="r" style="left:514.2px;top:214.7px;width:14.0px;height:13.9px;background:#c2bfbd;"></div>
<div class="r" style="left:527.7px;top:214.7px;width:14.0px;height:13.9px;background:#c0c0c0;"></div>
<div class="r" style="left:541.1px;top:214.7px;width:14.0px;height:13.9px;background:#9e9e9e;"></div>
<div class="r" style="left:554.5px;top:214.7px;width:14.0px;height:13.9px;background:#cdcdcd;"></div>
<div class="r" style="left:568.0px;top:214.7px;width:14.0px;height:13.9px;background:#a79f9d;"></div>
<div class="r" style="left:581.4px;top:214.7px;width:14.0px;height:13.9px;background:#bac2c8;"></div>
<div class="r" style="left:594.8px;top:214.7px;width:14.0px;height:13.9px;background:#dbdad6;"></div>
<div class="r" style="left:608.3px;top:214.7px;width:14.0px;height:13.9px;background:#bebdb9;"></div>
<div class="r" style="left:621.7px;top:214.7px;width:14.0px;height:13.9px;background:#a7abae;"></div>
<div class="r" style="left:635.1px;top:214.7px;width:14.0px;height:13.9px;background:#e2e2e2;"></div>
<div class="r" style="left:648.5px;top:214.7px;width:14.0px;height:13.9px;background:#bcb8b6;"></div>
<div class="r" style="left:662.0px;top:214.7px;width:14.0px;height:13.9px;background:#a2a2a2;"></div>
<div class="r" style="left:675.4px;top:214.7px;width:14.0px;height:13.9px;background:#f2f3f5;"></div>
<div class="r" style="left:688.8px;top:214.7px;width:14.0px;height:13.9px;background:#d2d2d2;"></div>
<div class="r" style="left:702.3px;top:214.7px;width:14.0px;height:13.9px;background:#cbcbcb;"></div>
<div class="r" style="left:715.7px;top:214.7px;width:14.0px;height:13.9px;background:#c9c9c9;"></div>
<div class="r" style="left:729.1px;top:214.7px;width:14.0px;height:13.9px;background:#cfcfcf;"></div>
<div class="r" style="left:742.6px;top:214.7px;width:14.0px;height:13.9px;background:#d8d8da;"></div>
<div class="r" style="left:756.0px;top:214.7px;width:14.0px;height:13.9px;background:#dcdcd8;"></div>
<div class="r" style="left:769.4px;top:214.7px;width:14.0px;height:13.9px;background:#c3c3c2;"></div>
<div class="r" style="left:782.8px;top:214.7px;width:14.0px;height:13.9px;background:#d5d5d5;"></div>
<div class="r" style="left:796.3px;top:214.7px;width:14.0px;height:13.9px;background:#a9a7a8;"></div>
<div class="r" style="left:809.7px;top:214.7px;width:14.0px;height:13.9px;background:#d0d0d0;"></div>
<div class="r" style="left:823.1px;top:214.7px;width:14.0px;height:13.9px;background:#a3a3a3;"></div>
<div class="r" style="left:836.6px;top:214.7px;width:14.0px;height:13.9px;background:#c8c8c9;"></div>
<div class="r" style="left:850.0px;top:214.7px;width:14.0px;height:13.9px;background:#dedede;"></div>
<div class="r" style="left:403px;top:269px;width:76px;height:46px;background:#f3f3f3;border:1px solid #d3d3d3;border-radius:3px"></div>
<div class="t" style="left:420px;top:284px;font-size:22px;line-height:22px;color:#1a1a1a;font-weight:normal;">编辑</div>
<div class="r" style="left:504px;top:269px;width:76px;height:46px;background:#f3f3f3;border:1px solid #d3d3d3;border-radius:3px"></div>
<div class="t" style="left:521px;top:284px;font-size:22px;line-height:22px;color:#1a1a1a;font-weight:normal;">删除</div>
<svg style="left:1905px;top:285px" width="44" height="16" viewBox="0 0 44 16"><circle cx="9" cy="8.5" r="3.6" fill="#5f6670"/><circle cx="22" cy="8.5" r="3.6" fill="#5f6670"/><circle cx="35" cy="8.5" r="3.6" fill="#5f6670"/></svg>
<svg style="left:2454px;top:199px" width="34" height="24" viewBox="0 0 34 24"><path d="M2,12 C6,5 11,2 17,2 C23,2 28,5 32,12 C28,19 23,22 17,22 C11,22 6,19 2,12 Z" fill="#5f6670"/><circle cx="17" cy="12" r="5.6" fill="#fff"/><circle cx="17" cy="12" r="3" fill="#5f6670"/></svg>
<div class="r" style="left:405px;top:350px;width:264px;height:47px;background:#f3f3f3;"></div>
<div class="t" style="left:405px;top:363.0px;width:246.5px;text-align:right;font-size:21px;line-height:21px;color:#7b8290">代码</div>
<div class="r" style="left:689px;top:396px;width:487px;height:1px;background:#e2e2ea;"></div>
<div class="t" style="left:688px;top:359.5px;font-size:22.8px;line-height:22.8px;color:#1a1a1a;font-weight:normal;transform:scaleX(0.945);transform-origin:0 0">BL_000039</div>
<div class="r" style="left:1196px;top:350px;width:264px;height:47px;background:#f3f3f3;"></div>
<div class="t" style="left:1196px;top:363.0px;width:246.5px;text-align:right;font-size:21px;line-height:21px;color:#7b8290">状态</div>
<div class="r" style="left:1480px;top:396px;width:487px;height:1px;background:#e2e2ea;"></div>
<div class="t" style="left:1479px;top:362.5px;font-size:21.5px;line-height:21.5px;color:#1a1a1a;font-weight:normal;">待审批</div>
<div class="r" style="left:405px;top:405px;width:264px;height:46px;background:#f3f3f3;"></div>
<div class="t" style="left:405px;top:417.5px;width:246.5px;text-align:right;font-size:21px;line-height:21px;color:#7b8290">项目名称</div>
<div class="r" style="left:689px;top:450px;width:487px;height:1px;background:#e2e2ea;"></div>
<div class="r" style="left:690.0px;top:417.0px;width:14.0px;height:14.3px;background:#a8d0ee;"></div>
<div class="r" style="left:703.5px;top:417.0px;width:14.0px;height:14.3px;background:#b3d6f0;"></div>
<div class="r" style="left:716.9px;top:417.0px;width:14.0px;height:14.3px;background:#b3d6f0;"></div>
<div class="r" style="left:730.4px;top:417.0px;width:14.0px;height:14.3px;background:#c3dff3;"></div>
<div class="r" style="left:743.8px;top:417.0px;width:14.0px;height:14.3px;background:#c9e1f4;"></div>
<div class="r" style="left:757.3px;top:417.0px;width:14.0px;height:14.3px;background:#bddbf2;"></div>
<div class="r" style="left:770.7px;top:417.0px;width:14.0px;height:14.3px;background:#c3dff3;"></div>
<div class="r" style="left:784.2px;top:417.0px;width:14.0px;height:14.3px;background:#a4cdec;"></div>
<div class="r" style="left:797.6px;top:417.0px;width:14.0px;height:14.3px;background:#c6e0f3;"></div>
<div class="r" style="left:811.1px;top:417.0px;width:14.0px;height:14.3px;background:#c9e1f4;"></div>
<div class="r" style="left:824.5px;top:417.0px;width:14.0px;height:14.3px;background:#a0cbeb;"></div>
<div class="r" style="left:838.0px;top:417.0px;width:14.0px;height:14.3px;background:#b5d7f0;"></div>
<div class="r" style="left:851.4px;top:417.0px;width:14.0px;height:14.3px;background:#b3d6f0;"></div>
<div class="r" style="left:864.9px;top:417.0px;width:14.0px;height:14.3px;background:#a7cfed;"></div>
<div class="r" style="left:878.3px;top:417.0px;width:14.0px;height:14.3px;background:#bfdcf2;"></div>
<div class="r" style="left:891.8px;top:417.0px;width:14.0px;height:14.3px;background:#a6ceed;"></div>
<div class="r" style="left:905.2px;top:417.0px;width:14.0px;height:14.3px;background:#c4dff3;"></div>
<div class="r" style="left:690.0px;top:430.7px;width:14.0px;height:13.9px;background:#d9eaf7;"></div>
<div class="r" style="left:703.5px;top:430.7px;width:14.0px;height:13.9px;background:#dcecf8;"></div>
<div class="r" style="left:716.9px;top:430.7px;width:14.0px;height:13.9px;background:#e0eef8;"></div>
<div class="r" style="left:730.4px;top:430.7px;width:14.0px;height:13.9px;background:#e3f0f9;"></div>
<div class="r" style="left:743.8px;top:430.7px;width:14.0px;height:13.9px;background:#e6f1fa;"></div>
<div class="r" style="left:757.3px;top:430.7px;width:14.0px;height:13.9px;background:#e6f1fa;"></div>
<div class="r" style="left:770.7px;top:430.7px;width:14.0px;height:13.9px;background:#dfedf8;"></div>
<div class="r" style="left:784.2px;top:430.7px;width:14.0px;height:13.9px;background:#e0eef8;"></div>
<div class="r" style="left:797.6px;top:430.7px;width:14.0px;height:13.9px;background:#e2eff9;"></div>
<div class="r" style="left:811.1px;top:430.7px;width:14.0px;height:13.9px;background:#e2eff9;"></div>
<div class="r" style="left:824.5px;top:430.7px;width:14.0px;height:13.9px;background:#dbebf7;"></div>
<div class="r" style="left:838.0px;top:430.7px;width:14.0px;height:13.9px;background:#dfedf8;"></div>
<div class="r" style="left:851.4px;top:430.7px;width:14.0px;height:13.9px;background:#dfedf8;"></div>
<div class="r" style="left:864.9px;top:430.7px;width:14.0px;height:13.9px;background:#dfedf8;"></div>
<div class="r" style="left:878.3px;top:430.7px;width:14.0px;height:13.9px;background:#e0eef8;"></div>
<div class="r" style="left:891.8px;top:430.7px;width:14.0px;height:13.9px;background:#dcecf8;"></div>
<div class="r" style="left:905.2px;top:430.7px;width:14.0px;height:13.9px;background:#e0eef8;"></div>
<div class="t" style="left:927px;top:414px;font-size:22px;line-height:22px;color:#0b78c9;font-weight:normal;">(</div>
<div class="t" style="left:940px;top:414px;font-size:22px;line-height:22px;color:#0b78c9;font-weight:normal;">2025000004</div>
<div class="t" style="left:1071px;top:414px;font-size:22px;line-height:22px;color:#0b78c9;font-weight:normal;">)</div>
<div class="r" style="left:405px;top:459px;width:264px;height:46px;background:#f3f3f3;"></div>
<div class="t" style="left:405px;top:471.5px;width:246.5px;text-align:right;font-size:21px;line-height:21px;color:#7b8290">标题</div>
<div class="r" style="left:689px;top:504px;width:1278px;height:1px;background:#e2e2ea;"></div>
<div class="t" style="left:590px;top:472px;font-size:20px;line-height:20px;color:#f01818;font-weight:normal;">*</div>
<div class="t" style="left:921px;top:471.5px;font-size:21px;line-height:21px;color:#1a1a1a;font-weight:normal;">变更申请</div>
<div class="r" style="left:690.0px;top:471.0px;width:14.0px;height:14.1px;background:#bdbdbd;"></div>
<div class="r" style="left:703.5px;top:471.0px;width:14.0px;height:14.1px;background:#b0b0b0;"></div>
<div class="r" style="left:716.9px;top:471.0px;width:14.0px;height:14.1px;background:#a6a6a6;"></div>
<div class="r" style="left:730.4px;top:471.0px;width:14.0px;height:14.1px;background:#bfbfbf;"></div>
<div class="r" style="left:743.8px;top:471.0px;width:14.0px;height:14.1px;background:#bbbbbb;"></div>
<div class="r" style="left:757.3px;top:471.0px;width:14.0px;height:14.1px;background:#c8c8c8;"></div>
<div class="r" style="left:770.7px;top:471.0px;width:14.0px;height:14.1px;background:#bdbdbd;"></div>
<div class="r" style="left:784.2px;top:471.0px;width:14.0px;height:14.1px;background:#b8b8b8;"></div>
<div class="r" style="left:797.6px;top:471.0px;width:14.0px;height:14.1px;background:#c3c3c3;"></div>
<div class="r" style="left:811.1px;top:471.0px;width:14.0px;height:14.1px;background:#a9a9a9;"></div>
<div class="r" style="left:824.5px;top:471.0px;width:14.0px;height:14.1px;background:#acacac;"></div>
<div class="r" style="left:838.0px;top:471.0px;width:14.0px;height:14.1px;background:#c9c9c9;"></div>
<div class="r" style="left:851.4px;top:471.0px;width:14.0px;height:14.1px;background:#bcbcbc;"></div>
<div class="r" style="left:864.9px;top:471.0px;width:14.0px;height:14.1px;background:#9f9f9f;"></div>
<div class="r" style="left:878.3px;top:471.0px;width:14.0px;height:14.1px;background:#b1b1b1;"></div>
<div class="r" style="left:891.8px;top:471.0px;width:14.0px;height:14.1px;background:#b1b1b1;"></div>
<div class="r" style="left:905.2px;top:471.0px;width:14.0px;height:14.1px;background:#b3b3b3;"></div>
<div class="r" style="left:918.7px;top:471.0px;width:14.0px;height:14.1px;background:#cbcbcb;"></div>
<div class="r" style="left:690.0px;top:484.5px;width:14.0px;height:13.1px;background:#d8d8d8;"></div>
<div class="r" style="left:703.5px;top:484.5px;width:14.0px;height:13.1px;background:#d8d8d8;"></div>
<div class="r" style="left:716.9px;top:484.5px;width:14.0px;height:13.1px;background:#d5d5d5;"></div>
<div class="r" style="left:730.4px;top:484.5px;width:14.0px;height:13.1px;background:#e6e6e6;"></div>
<div class="r" style="left:743.8px;top:484.5px;width:14.0px;height:13.1px;background:#c8c8c8;"></div>
<div class="r" style="left:757.3px;top:484.5px;width:14.0px;height:13.1px;background:#f3f3f3;"></div>
<div class="r" style="left:770.7px;top:484.5px;width:14.0px;height:13.1px;background:#dedede;"></div>
<div class="r" style="left:784.2px;top:484.5px;width:14.0px;height:13.1px;background:#d9d9d9;"></div>
<div class="r" style="left:797.6px;top:484.5px;width:14.0px;height:13.1px;background:#d8d8d8;"></div>
<div class="r" style="left:811.1px;top:484.5px;width:14.0px;height:13.1px;background:#d5d5d5;"></div>
<div class="r" style="left:824.5px;top:484.5px;width:14.0px;height:13.1px;background:#d5d5d5;"></div>
<div class="r" style="left:838.0px;top:484.5px;width:14.0px;height:13.1px;background:#efefef;"></div>
<div class="r" style="left:851.4px;top:484.5px;width:14.0px;height:13.1px;background:#dcdcdc;"></div>
<div class="r" style="left:864.9px;top:484.5px;width:14.0px;height:13.1px;background:#d9d9d9;"></div>
<div class="r" style="left:878.3px;top:484.5px;width:14.0px;height:13.1px;background:#dcdcdc;"></div>
<div class="r" style="left:891.8px;top:484.5px;width:14.0px;height:13.1px;background:#dadada;"></div>
<div class="r" style="left:905.2px;top:484.5px;width:14.0px;height:13.1px;background:#dcdcdc;"></div>
<div class="r" style="left:918.7px;top:484.5px;width:14.0px;height:13.1px;background:#dfdfdf;"></div>
<div class="r" style="left:405px;top:514px;width:264px;height:172px;background:#f3f3f3;"></div>
<div class="t" style="left:405px;top:589.5px;width:246.5px;text-align:right;font-size:21px;line-height:21px;color:#7b8290">描述</div>
<div class="r" style="left:689px;top:514px;width:1276px;height:170px;border:1px solid #e3e3ea"></div>
<div class="r" style="left:405px;top:694px;width:264px;height:172px;background:#f3f3f3;"></div>
<div class="t" style="left:405px;top:769.5px;width:246.5px;text-align:right;font-size:21px;line-height:21px;color:#7b8290">备注</div>
<div class="r" style="left:689px;top:694px;width:1276px;height:170px;border:1px solid #e3e3ea"></div>
<div class="r" style="left:405px;top:874px;width:264px;height:46px;background:#f3f3f3;"></div>
<div class="t" style="left:405px;top:886.5px;width:246.5px;text-align:right;font-size:21px;line-height:21px;color:#7b8290">提出人</div>
<div class="r" style="left:689px;top:919px;width:487px;height:1px;background:#e2e2ea;"></div>
<div class="t" style="left:688px;top:886.5px;font-size:22px;line-height:22px;color:#1a1a1a;font-weight:normal;">刘*宇</div>
<div class="r" style="left:1196px;top:874px;width:264px;height:46px;background:#f3f3f3;"></div>
<div class="t" style="left:1196px;top:886.5px;width:246.5px;text-align:right;font-size:21px;line-height:21px;color:#7b8290">提出日期</div>
<div class="r" style="left:1480px;top:919px;width:487px;height:1px;background:#e2e2ea;"></div>
<div class="t" style="left:1480px;top:886px;font-size:23.3px;line-height:23.3px;color:#1a1a1a;font-weight:normal;">2025-03-08</div>
<div class="r" style="left:405px;top:929px;width:264px;height:46px;background:#f3f3f3;"></div>
<div class="t" style="left:405px;top:941.5px;width:246.5px;text-align:right;font-size:21px;line-height:21px;color:#7b8290">修改人</div>
<div class="r" style="left:689px;top:974px;width:487px;height:1px;background:#e2e2ea;"></div>
<div class="t" style="left:688px;top:941.5px;font-size:22px;line-height:22px;color:#1a1a1a;font-weight:normal;">刘*宇</div>
<div class="r" style="left:1196px;top:929px;width:264px;height:46px;background:#f3f3f3;"></div>
<div class="t" style="left:1196px;top:941.5px;width:246.5px;text-align:right;font-size:21px;line-height:21px;color:#7b8290">修改时间</div>
<div class="r" style="left:1480px;top:974px;width:487px;height:1px;background:#e2e2ea;"></div>
<div class="t" style="left:1480px;top:941px;font-size:23.3px;line-height:23.3px;color:#1a1a1a;font-weight:normal;">2025-03-08</div>
<svg style="left:405px;top:1020px" width="34" height="24" viewBox="0 0 34 24"><path d="M8.2,7.5 L16.6,16 L25,7.5" fill="none" stroke="#5f6670" stroke-width="2.6" stroke-linecap="round" stroke-linejoin="round"/></svg>
<div class="t" style="left:445px;top:1023px;font-size:24px;line-height:24px;color:#1a1a1a;font-weight:bold;">变更情况</div>
<div class="r" style="left:405px;top:1074px;width:264px;height:46px;background:#f3f3f3;"></div>
<div class="t" style="left:405px;top:1086.5px;width:246.5px;text-align:right;font-size:21px;line-height:21px;color:#7b8290">基线标签</div>
<div class="r" style="left:689px;top:1119px;width:487px;height:1px;background:#e2e2ea;"></div>
<div class="t" style="left:688px;top:1086px;font-size:21px;line-height:21px;color:#1a1a1a;font-weight:normal;">变更发布</div>
<div class="r" style="left:1196px;top:1074px;width:264px;height:46px;background:#f3f3f3;"></div>
<div class="t" style="left:1196px;top:1086.5px;width:246.5px;text-align:right;font-size:21px;line-height:21px;color:#7b8290">变更说明</div>
<div class="r" style="left:1480px;top:1119px;width:487px;height:1px;background:#e2e2ea;"></div>
<div class="r" style="left:405px;top:1136px;width:1562px;height:55px;background:#f3f3f3;"></div>
<div class="r" style="left:530px;top:1136px;width:1px;height:55px;background:#dcdcdc;"></div>
<div class="r" style="left:722px;top:1136px;width:1px;height:55px;background:#dcdcdc;"></div>
<div class="r" style="left:948px;top:1136px;width:1px;height:55px;background:#dcdcdc;"></div>
<div class="r" style="left:1173px;top:1136px;width:1px;height:55px;background:#dcdcdc;"></div>
<div class="r" style="left:1366px;top:1136px;width:1px;height:55px;background:#dcdcdc;"></div>
<div class="r" style="left:1640px;top:1136px;width:1px;height:55px;background:#dcdcdc;"></div>
<div class="t" style="left:317px;top:1153px;width:300px;text-align:center;font-size:21px;line-height:21px;color:#333">发布</div>
<div class="t" style="left:476px;top:1153px;width:300px;text-align:center;font-size:21px;line-height:21px;color:#333">变更范围</div>
<div class="t" style="left:685px;top:1153px;width:300px;text-align:center;font-size:21px;line-height:21px;color:#333">正式版</div>
<div class="t" style="left:910px;top:1153px;width:300px;text-align:center;font-size:21px;line-height:21px;color:#333">修订版</div>
<div class="t" style="left:1353px;top:1153px;width:300px;text-align:center;font-size:21px;line-height:21px;color:#333">版本标签</div>
<div class="t" style="left:1710px;top:1153px;width:300px;text-align:center;font-size:21px;line-height:21px;color:#333">说明</div>
<div class="r" style="left:405px;top:1246px;width:1562px;height:1px;background:#e5e5ea;"></div>
<div class="r" style="left:405px;top:1302px;width:1562px;height:1px;background:#e5e5ea;"></div>
<div class="r" style="left:405px;top:1357px;width:1562px;height:1px;background:#e5e5ea;"></div>
<div class="r" style="left:455px;top:1206.5px;width:24px;height:24px;background:#f1f1f1;border:1px solid #dedede;border-radius:3px"></div>
<div class="t" style="left:544px;top:1209.2px;font-size:21.2px;line-height:21.2px;color:#333;font-weight:normal;">项目信息</div>
<div class="t" style="left:685.5px;top:1208.0px;width:300px;text-align:center;font-size:22px;line-height:22px;color:#0b78c9">V4</div>
<div class="t" style="left:910.5px;top:1208.0px;width:300px;text-align:center;font-size:22px;line-height:22px;color:#0b78c9">V3</div>
<div class="t" style="left:1120px;top:1208.0px;width:300px;text-align:center;font-size:22px;line-height:22px;color:#0b78c9">版本比较</div>
<div class="r" style="left:455px;top:1262.0px;width:24px;height:24px;background:#f1f1f1;border:1px solid #dedede;border-radius:3px"></div>
<div class="t" style="left:544px;top:1265.2px;font-size:21.2px;line-height:21.2px;color:#333;font-weight:normal;">阶段</div>
<div class="t" style="left:685.5px;top:1263.5px;width:300px;text-align:center;font-size:22px;line-height:22px;color:#0b78c9">V1</div>
<div class="t" style="left:910.5px;top:1263.5px;width:300px;text-align:center;font-size:22px;line-height:22px;color:#0b78c9">V2 (修订)</div>
<div class="t" style="left:1120px;top:1263.5px;width:300px;text-align:center;font-size:22px;line-height:22px;color:#0b78c9">版本比较</div>
<div class="r" style="left:455px;top:1317.5px;width:24px;height:24px;background:#f1f1f1;border:1px solid #dedede;border-radius:3px"></div>
<div class="t" style="left:544px;top:1321.2px;font-size:21.2px;line-height:21.2px;color:#333;font-weight:normal;">交付物</div>
<div class="t" style="left:685.5px;top:1319.0px;width:300px;text-align:center;font-size:22px;line-height:22px;color:#0b78c9">V1</div>
<div class="r" style="left:455px;top:1373.0px;width:24px;height:24px;background:#f1f1f1;border:1px solid #dedede;border-radius:3px"></div>
<div class="t" style="left:544px;top:1376.2px;font-size:21.2px;line-height:21.2px;color:#333;font-weight:normal;">成本预算</div>
<div class="t" style="left:685.5px;top:1374.5px;width:300px;text-align:center;font-size:22px;line-height:22px;color:#0b78c9">V1</div>
<div class="r" style="left:1997px;top:334px;width:13px;height:610px;background:#dadada;border-radius:6.5px"></div>
<div class="r" style="left:2016px;top:254px;width:1px;height:1141px;background:#e3e8ef;"></div>
<svg style="left:2030px;top:288px" width="34" height="24" viewBox="0 0 34 24"><path d="M8.5,7.5 L17,16.5 L25.5,7.5" fill="none" stroke="#5f6670" stroke-width="2.5" stroke-linecap="round" stroke-linejoin="round"/></svg>
<div class="t" style="left:2069px;top:293px;font-size:21.5px;line-height:21.5px;color:#1a1a1a;font-weight:normal;">评论</div>
<div class="t" style="left:2126px;top:288px;font-size:26px;line-height:26px;color:#7d8aa0;font-weight:normal;">0</div>
<div class="r" style="left:2034px;top:340px;width:500px;height:145px;border:1px solid #d9d9d9;border-radius:4px"></div>
<div class="r" style="left:2035px;top:403px;width:470px;height:1px;background:#dcdcdc;"></div>
<div class="r" style="left:2322px;top:352px;width:2px;height:39px;background:#d6d6d6;"></div>
<div class="r" style="left:2444px;top:352px;width:2px;height:39px;background:#d6d6d6;"></div>
<svg style="left:2040px;top:345px" width="465" height="50" viewBox="2040 345 465 50">
<path d="M2065,382.8 H2051.5 C2050.8,382.8 2050.3,382.3 2050.3,381.6 V359.2 C2050.3,358.5 2050.8,358 2051.5,358 H2076.5 C2077.2,358 2077.7,358.5 2077.7,359.2 V369" fill="none" stroke="#333" stroke-width="2.4"/>
<path d="M2051,383.5 V377.3 L2059.2,369.8 L2065.3,375.5 C2063.8,377.5 2063.8,381 2065.3,383.5 Z" fill="#333"/>
<circle cx="2070.6" cy="364.6" r="3.5" fill="#333"/>
<path d="M2074.6,386 V373.5 M2069,379.2 L2074.6,373 L2080.5,379.2" fill="none" stroke="#333" stroke-width="2.8" stroke-linecap="round" stroke-linejoin="round"/>
<path d="M2117.4,365.3 A7.8,7.8 0 1 1 2129.3,373.8 M2114.4,369.6 A7.8,7.8 0 1 0 2126.2,377.6 M2119,375.2 L2124.3,367.9" fill="none" stroke="#333" stroke-width="2.4" stroke-linecap="round"/>
<path d="M2161,383 L2169.5,360.5 H2171.5 L2180,383 M2164.5,375 H2176.5" fill="none" stroke="#333" stroke-width="2.6"/>
<path d="M2188.8,361 V382.5 M2185.6,363.5 L2188.8,360.3 L2192,363.5 M2185.6,379.8 L2188.8,383 L2192,379.8" fill="none" stroke="#333" stroke-width="2.3"/>
<path d="M2211,369 L2218,376 L2225,369" fill="none" stroke="#333" stroke-width="2.4" stroke-linecap="round"/>
<path d="M2252.6,379.6 L2261,360.5 H2262.3 L2270.6,379.6 M2256,373 H2267.3" fill="none" stroke="#333" stroke-width="2.1"/>
<rect x="2250" y="382" width="23" height="3.2" rx="1.5" fill="#333"/>
<path d="M2295,369 L2302,376 L2309,369" fill="none" stroke="#333" stroke-width="2.4" stroke-linecap="round"/>
<path d="M2345,361 H2355 C2359.5,361 2362,363.5 2362,366.5 C2362,369 2360.5,370.5 2358.5,371.2 C2361.5,372 2363.5,374.2 2363.5,377 C2363.5,380.5 2360.5,382.8 2356,382.8 H2346 Z M2349.8,365.2 V369.5 H2355 C2356.5,369.5 2357.4,368.6 2357.4,367.4 C2357.4,366.1 2356.5,365.2 2355,365.2 Z M2349.8,373.5 V378.6 H2355.5 C2357.3,378.6 2358.5,377.6 2358.5,376 C2358.5,374.5 2357.3,373.5 2355.5,373.5 Z" fill="#333" fill-rule="evenodd"/>
<path d="M2406,361.3 H2418 M2401.5,382.5 H2413.5 M2412,361.3 L2407.5,382.5" fill="none" stroke="#333" stroke-width="2.3"/>
<circle cx="2476.5" cy="362.5" r="2.5" fill="#333"/><circle cx="2476.5" cy="372.3" r="2.5" fill="#333"/><circle cx="2476.5" cy="382" r="2.5" fill="#333"/>
</svg>
<div class="t" style="left:2052px;top:429.5px;font-size:20px;line-height:20px;color:#8c8c8c;font-weight:normal;">说点什么<span style="letter-spacing:2.6px">...</span></div>
<svg style="left:2030px;top:545px" width="34" height="30" viewBox="0 0 34 30"><path d="M11,6.5 L20,15.5 L11,24.5" fill="none" stroke="#5f6670" stroke-width="2.5" stroke-linecap="round" stroke-linejoin="round"/></svg>
<div class="t" style="left:2069px;top:551px;font-size:21.5px;line-height:21.5px;color:#1a1a1a;font-weight:normal;">问题</div>
<div class="t" style="left:2126px;top:546px;font-size:26px;line-height:26px;color:#7d8aa0;font-weight:normal;">0</div>
<svg style="left:2436px;top:545px" width="69" height="30" viewBox="0 0 69 30"><path d="M15.3,5.5 V24.5 M5.8,15 H24.8" stroke="#1a7fd0" stroke-width="2.6" stroke-linecap="round"/><g fill="none" stroke="#1a7fd0" stroke-width="2.4"><rect transform="rotate(45 54.3 11.2)" x="46.8" y="6.7" width="15" height="9" rx="4.5"/><rect transform="rotate(45 62.8 19)" x="55.3" y="14.5" width="15" height="9" rx="4.5"/></g></svg>
<div class="t" style="left:2387.5px;top:1354.5px;font-size:38px;line-height:38px;color:#ff0000;font-weight:bold;transform:scaleX(0.655);transform-origin:0 0;letter-spacing:-0.3px;-webkit-text-stroke:1.2px #ff0000">cxy5.com</div>
</body></html>
